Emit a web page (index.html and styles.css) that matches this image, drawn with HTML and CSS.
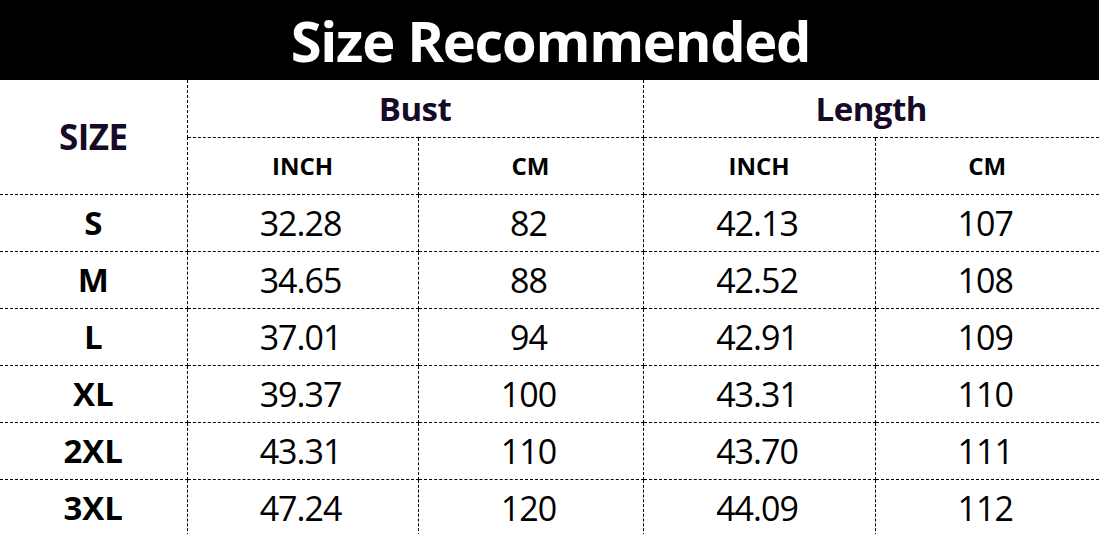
FILE: index.html
```html
<!DOCTYPE html>
<html lang="en">
<head>
<meta charset="utf-8">
<title>Size Recommended</title>
<link rel="stylesheet" href="styles.css">
</head>
<body>
<header class="title-bar"><h1 class="title">Size Recommended</h1></header>
<table class="size-table">
  <colgroup>
    <col class="c-size"><col class="c-bi"><col class="c-bc"><col class="c-li"><col class="c-lc">
  </colgroup>
  <thead>
    <tr>
      <th class="head-main head-size" rowspan="2">SIZE</th>
      <th class="head-main" colspan="2">Bust</th>
      <th class="head-main" colspan="2">Length</th>
    </tr>
    <tr>
      <th class="head-unit">INCH</th>
      <th class="head-unit">CM</th>
      <th class="head-unit">INCH</th>
      <th class="head-unit">CM</th>
    </tr>
  </thead>
  <tbody>
    <tr><th class="size">S</th><td>32.28</td><td>82</td><td>42.13</td><td>107</td></tr>
    <tr><th class="size">M</th><td>34.65</td><td>88</td><td>42.52</td><td>108</td></tr>
    <tr><th class="size">L</th><td>37.01</td><td>94</td><td>42.91</td><td>109</td></tr>
    <tr><th class="size">XL</th><td>39.37</td><td>100</td><td>43.31</td><td>110</td></tr>
    <tr><th class="size">2XL</th><td>43.31</td><td>110</td><td>43.70</td><td>111</td></tr>
    <tr><th class="size">3XL</th><td>47.24</td><td>120</td><td>44.09</td><td>112</td></tr>
  </tbody>
</table>
</body>
</html>
```

FILE: styles.css
```css
html, body {
  margin: 0;
  padding: 0;
  background: #fff;
}
body {
  width: 1099px;
  height: 534px;
  overflow: hidden;
  font-family: "Open Sans", "Noto Sans", sans-serif;
  color: #000;
}
.title-bar {
  height: 80px;
  background: #000;
  display: flex;
  align-items: center;
  justify-content: center;
}
.title {
  margin: 0;
  color: #fff;
  font-size: 56px;
  font-weight: 700;
  letter-spacing: -1.3px;
  line-height: 1;
  padding-left: 2px;
}
.size-table {
  width: 1099px;
  table-layout: fixed;
  border-collapse: collapse;
  border-style: hidden;
}
.c-size { width: 187px; }
.c-bi { width: 231px; }
.c-bc { width: 225px; }
.c-li { width: 232px; }
.c-lc { width: 224px; }
.size-table tr { height: 57px; }
.size-table th,
.size-table td {
  border: 1px dashed #000;
  padding: 0;
  text-align: center;
  vertical-align: middle;
}
.size-table thead tr:first-child th {
  border-top: 1px dashed #000;
}
.head-main {
  font-size: 33px;
  font-weight: 700;
  color: #170a26;
  letter-spacing: -0.5px;
}
.head-size {
  font-size: 35px;
}
.head-unit {
  font-size: 24px;
  font-weight: 700;
  color: #000;
}
.size {
  font-size: 33px;
  font-weight: 700;
}
.size-table td {
  font-size: 34px;
  font-weight: 400;
  letter-spacing: -1px;
  padding-right: 4px;
}
```
